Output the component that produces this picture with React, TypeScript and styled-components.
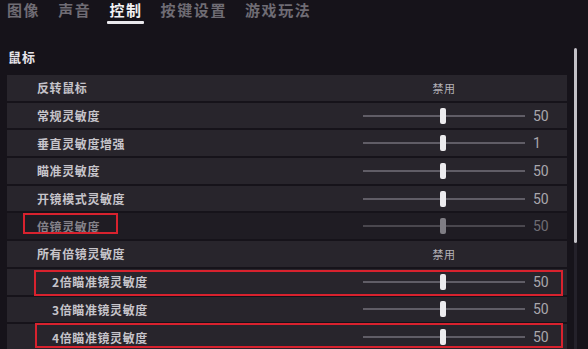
import React from 'react';
import styled, { createGlobalStyle } from 'styled-components';

const CJK = `"Noto Sans CJK SC", "Noto Sans", sans-serif`;

const GlobalStyle = createGlobalStyle`
  html, body {
    margin: 0;
    padding: 0;
    background: #16131a;
    overflow: hidden;
  }
  body {
    font-family: ${CJK};
  }
`;

const Screen = styled.div`
  width: 588px;
  height: 349px;
  display: flex;
  overflow: hidden;
  background: #16131a;
`;

const Main = styled.div`
  width: 567px;
  padding-left: 7px;
  box-sizing: border-box;
  display: flex;
  flex-direction: column;
`;

const TabBar = styled.div`
  display: flex;
  gap: 18px;
  height: 24px;
`;

const Tab = styled.div<{ $active?: boolean }>`
  display: flex;
  flex-direction: column;
  font-size: 15px;
  font-weight: 700;
  letter-spacing: 1.6px;
  line-height: 20px;
  color: ${p => (p.$active ? '#f2f1f4' : '#6f6c74')};

  &::after {
    content: '';
    display: ${p => (p.$active ? 'block' : 'none')};
    height: 3px;
    margin: 1px -1px 0 -2px;
    border-radius: 1px;
    background: #e9e8ec;
  }
`;

const SectionTitle = styled.div`
  margin: 24px 0 10px 1px;
  font-size: 13px;
  font-weight: 700;
  line-height: 17px;
  letter-spacing: 1px;
  color: #e7e5ea;
`;

const List = styled.div`
  display: flex;
  flex-direction: column;
  gap: 2px;
`;

const Row = styled.div<{ $disabled?: boolean }>`
  position: relative;
  height: 25.7px;
  display: grid;
  grid-template-columns: 356px 162px 1fr;
  align-items: center;
  background: ${p => (p.$disabled ? '#1f1c23' : '#28252c')};
`;

const Label = styled.div<{ $indent?: boolean; $disabled?: boolean }>`
  padding-left: ${p => (p.$indent ? '45px' : '30px')};
  font-size: 12px;
  font-weight: 700;
  letter-spacing: 0.6px;
  color: ${p => (p.$disabled ? '#85828a' : '#c6c4ca')};
`;

const Track = styled.div<{ $disabled?: boolean }>`
  position: relative;
  height: 2px;
  background: ${p => (p.$disabled ? '#4a474e' : '#605d66')};
  display: flex;
  align-items: center;
  justify-content: center;
`;

const Thumb = styled.div<{ $disabled?: boolean }>`
  position: absolute;
  top: -7px;
  width: 6px;
  height: 16px;
  margin-left: -3px;
  border-radius: 2px;
  background: ${p => (p.$disabled ? '#7f7d84' : '#ecebee')};
`;

const Value = styled.div<{ $disabled?: boolean }>`
  padding-left: 8px;
  font-family: Roboto, "Liberation Sans", sans-serif;
  font-size: 14px;
  color: ${p => (p.$disabled ? '#6f6d74' : '#a9a7ad')};
`;

const Toggle = styled.div`
  text-align: center;
  font-size: 11px;
  letter-spacing: 0.5px;
  color: #b5b3b9;
`;

const Annotation = styled.span<{ $left: number; $top: number; $w: number; $h: number }>`
  position: absolute;
  left: ${p => p.$left}px;
  top: ${p => p.$top}px;
  width: ${p => p.$w}px;
  height: ${p => p.$h}px;
  box-sizing: border-box;
  border: 2px solid #d8222e;
  pointer-events: none;
`;

const ScrollCol = styled.div`
  flex: 1;
  padding: 48px 0 0 7px;
  display: flex;
  flex-direction: column;
`;

const ScrollThumb = styled.div`
  width: 3px;
  height: 195px;
  border-radius: 1.5px;
  background: #c3c1c7;
`;

const ScrollRest = styled.div`
  width: 3px;
  flex: 1;
  background: #24212a;
`;

type Item = {
  label: string;
  value?: string;
  toggle?: string;
  indent?: boolean;
  disabled?: boolean;
  mark?: { left: number; top: number; w: number; h: number };
};

const items: Item[] = [
  { label: '反转鼠标', toggle: '禁用' },
  { label: '常规灵敏度', value: '50' },
  { label: '垂直灵敏度增强', value: '1' },
  { label: '瞄准灵敏度', value: '50' },
  { label: '开镜模式灵敏度', value: '50' },
  { label: '倍镜灵敏度', value: '50', disabled: true, mark: { left: 16, top: 0, w: 95, h: 21 } },
  { label: '所有倍镜灵敏度', toggle: '禁用' },
  { label: '2倍瞄准镜灵敏度', value: '50', indent: true, mark: { left: 27, top: 1, w: 529, h: 26 } },
  { label: '3倍瞄准镜灵敏度', value: '50', indent: true },
  { label: '4倍瞄准镜灵敏度', value: '50', indent: true, mark: { left: 28, top: -1, w: 528, h: 25 } },
];

const tabs = ['图像', '声音', '控制', '按键设置', '游戏玩法'];

function SettingRow({ item }: { item: Item }) {
  return (
    <Row $disabled={item.disabled}>
      <Label $indent={item.indent} $disabled={item.disabled}>{item.label}</Label>
      {item.toggle ? (
        <Toggle>{item.toggle}</Toggle>
      ) : (
        <Track $disabled={item.disabled}>
          <Thumb $disabled={item.disabled} />
        </Track>
      )}
      {item.toggle ? <span /> : <Value $disabled={item.disabled}>{item.value}</Value>}
      {item.mark && (
        <Annotation $left={item.mark.left} $top={item.mark.top} $w={item.mark.w} $h={item.mark.h} />
      )}
    </Row>
  );
}

export default function App() {
  return (
    <>
      <GlobalStyle />
      <Screen>
        <Main>
          <TabBar>
            {tabs.map(t => (
              <Tab key={t} $active={t === '控制'}>{t}</Tab>
            ))}
          </TabBar>
          <SectionTitle>鼠标</SectionTitle>
          <List>
            {items.map(it => (
              <SettingRow key={it.label} item={it} />
            ))}
          </List>
        </Main>
        <ScrollCol>
          <ScrollThumb />
          <ScrollRest />
        </ScrollCol>
      </Screen>
    </>
  );
}
